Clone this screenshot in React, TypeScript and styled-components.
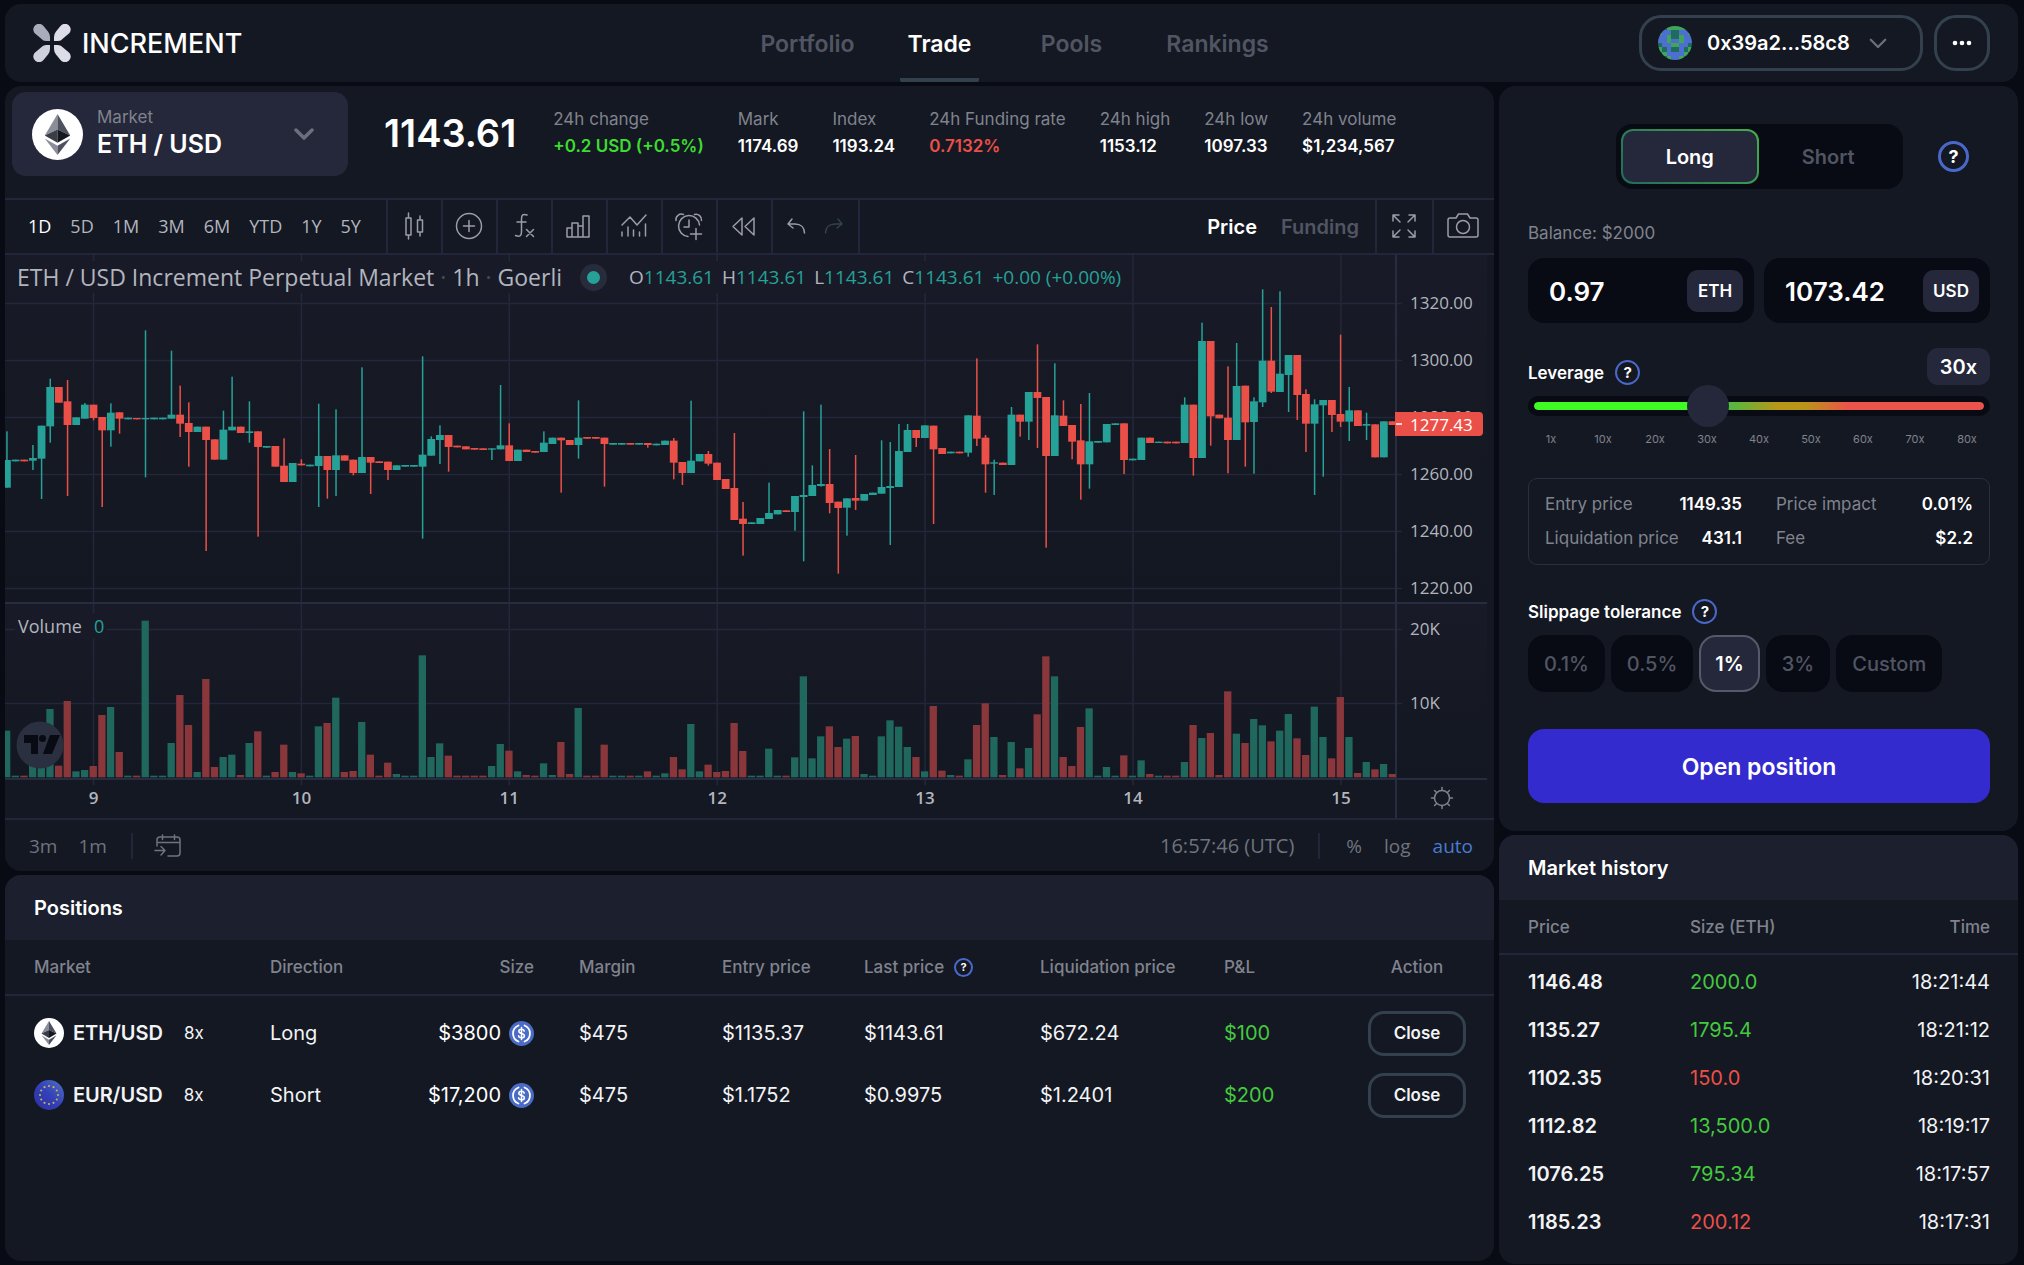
import React, { useState } from "react";
import styled, { createGlobalStyle, css } from "styled-components";

const c = {
  page: "#080b13",
  panel: "#141822",
  raised: "#1c1f2e",
  chip: "#24283a",
  line: "#23263a",
  outline: "#33414f",
  text: "#ffffff",
  muted: "#80838e",
  dim: "#515563",
  green: "#45c93f",
  lime: "#3ddc30",
  red: "#eb5048",
  teal: "#26a197",
  blue: "#4a68c9",
  chartText: "#b2b5be",
};

const ui = `Inter, "Liberation Sans", sans-serif`;
const chartFont = `"Open Sans", "Noto Sans", sans-serif`;

const GlobalStyle = createGlobalStyle`
  *, *::before, *::after { box-sizing: border-box; }
  body { margin: 0; background: ${c.page}; color: ${c.text}; font-family: ${ui}; }
  button, input, select { font: inherit; color: inherit; margin: 0; }
  button { background: none; border: 0; padding: 0; cursor: pointer; }
  h1, h2, p, dl, dd { margin: 0; }
  svg { display: block; flex: none; }
`;

/* ---------- page frame ---------- */

const Page = styled.div`
  min-height: 100vh;
  display: flex;
  flex-direction: column;
  gap: 4px;
  padding: 4px 6px 1px 5px;
`;

const Panel = styled.section`
  background: ${c.panel};
  border-radius: 16px;
  overflow: hidden;
`;

const Main = styled.main`
  flex: 1;
  display: grid;
  grid-template-columns: minmax(0, 1fr) 519px;
  gap: 5px;
`;

const Column = styled.div<{ $bottom?: number }>`
  display: flex;
  flex-direction: column;
  gap: 4px;
  padding-bottom: ${(p) => p.$bottom ?? 0}px;
`;

const GrowPanel = styled(Panel)`
  flex: 1;
`;

/* ---------- header ---------- */

const Header = styled.header`
  height: 78px;
  display: grid;
  grid-template-columns: 1fr auto 1fr;
  align-items: center;
  padding: 0 28px;
  background: ${c.panel};
  border-radius: 16px;
`;

const Brand = styled.a`
  display: flex;
  align-items: center;
  gap: 11px;
  color: ${c.text};
  text-decoration: none;
  font-size: 27px;
  font-weight: 500;
`;

const Nav = styled.nav`
  align-self: stretch;
  display: grid;
  grid-template-columns: repeat(3, 132px) 160px;
  justify-items: center;
  padding-left: 16px;
`;

const NavLink = styled.a<{ $active?: boolean }>`
  display: flex;
  align-items: center;
  padding: 6px 8px 0;
  border-bottom: 4px solid ${(p) => (p.$active ? c.outline : "transparent")};
  border-radius: 2px;
  color: ${(p) => (p.$active ? c.text : c.dim)};
  font-size: 23px;
  font-weight: 600;
  text-decoration: none;
`;

const Actions = styled.div`
  display: flex;
  justify-content: flex-end;
  gap: 11px;
`;

const OutlineButton = styled.button`
  display: flex;
  align-items: center;
  justify-content: center;
  border: 3px solid ${c.outline};
  font-weight: 600;
`;

const AccountButton = styled(OutlineButton)`
  height: 56px;
  width: 284px;
  justify-content: flex-start;
  gap: 15px;
  padding: 0 16px;
  border-radius: 22px;
  font-size: 20px;
`;

const AccountName = styled.span`
  margin-right: 4px;
`;

const MoreButton = styled(OutlineButton)`
  width: 56px;
  height: 56px;
  border-radius: 22px;
`;

/* ---------- market summary ---------- */

const Summary = styled.div`
  display: flex;
  align-items: flex-start;
  height: 114px;
  padding: 6px 7px 0;
  border-bottom: 2px solid ${c.line};
`;

const MarketPicker = styled.div`
  position: relative;
  display: flex;
  align-items: center;
  gap: 14px;
  width: 336px;
  height: 84px;
  padding: 0 20px;
  background: ${c.chip};
  border-radius: 14px;
`;

const PickerText = styled.div`
  flex: 1;
  display: flex;
  flex-direction: column;
  padding-bottom: 4px;
`;

const PickerLabel = styled.label`
  color: ${c.muted};
  font-size: 17px;
  line-height: 24px;
`;

const PickerSelect = styled.select`
  appearance: none;
  background: transparent;
  border: 0;
  outline: 0;
  padding: 0;
  font-size: 25px;
  font-weight: 600;
  line-height: 30px;
  option {
    background: ${c.chip};
  }
`;

const ChevronSlot = styled.span`
  margin-right: 14px;
`;

const LastPrice = styled.h1`
  margin: 0 37px 0 36px;
  font-size: 38px;
  font-weight: 600;
  line-height: 82px;
`;

const Stats = styled.dl`
  display: flex;
  gap: 34px;
  padding-top: 14px;
`;

const Stat = styled.div`
  font-size: 17px;
  line-height: 27px;
  white-space: nowrap;
`;

const StatName = styled.dt`
  color: ${c.muted};
`;

const StatValue = styled.dd<{ $color?: string }>`
  color: ${(p) => p.$color ?? c.text};
  font-weight: 600;
`;

/* ---------- chart toolbar ---------- */

const Toolbar = styled.div`
  display: flex;
  align-items: stretch;
  height: 55px;
  border-bottom: 2px solid ${c.line};
`;

const Ranges = styled.div`
  display: flex;
  align-items: center;
  justify-content: space-between;
  width: 381px;
  padding: 0 25px 2px 23px;
`;

const RangeButton = styled.button<{ $active?: boolean }>`
  color: ${(p) => (p.$active ? c.text : c.chartText)};
  font-family: ${chartFont};
  font-size: 18px;
`;

const ToolCell = styled.div<{ $w?: number }>`
  display: flex;
  align-items: center;
  justify-content: center;
  gap: 18px;
  width: ${(p) => p.$w ?? 55}px;
  padding: 0 2px 2px 0;
  border-left: 2px solid ${c.line};
  color: #9a9da8;
`;

const ToolSpacer = styled.div`
  flex: 1;
  display: flex;
  align-items: center;
  justify-content: flex-end;
  gap: 24px;
  padding-right: 16px;
  border-left: 2px solid ${c.line};
`;

const ViewButton = styled.button<{ $active?: boolean }>`
  color: ${(p) => (p.$active ? c.text : c.dim)};
  font-size: 20px;
  font-weight: 600;
`;

/* ---------- chart ---------- */

const ChartArea = styled.div`
  position: relative;
  font-family: ${chartFont};
`;

const Legend = styled.div`
  position: absolute;
  left: 9px;
  top: 6px;
  display: flex;
  align-items: center;
  gap: 18px;
  height: 32px;
  padding: 0 3px;
  background: #181b27;
  color: ${c.chartText};
  white-space: nowrap;
`;

const LegendTitle = styled.h2`
  font-size: 23px;
  font-weight: 400;
  span {
    color: #454a5a;
  }
`;

const StatusDot = styled.span`
  width: 27px;
  height: 27px;
  border: 7px solid #272b3b;
  border-radius: 50%;
  background: ${c.teal};
`;

const Ohlc = styled.p`
  display: flex;
  gap: 8px;
  margin-left: 4px;
  font-size: 19px;
  b {
    color: ${c.teal};
    font-weight: 400;
  }
`;

const VolumeLegend = styled.p`
  position: absolute;
  left: 10px;
  top: 358px;
  padding: 0 3px;
  background: #181b27;
  color: ${c.chartText};
  font-size: 18px;
  line-height: 26px;
  b {
    margin-left: 12px;
    color: ${c.teal};
    font-weight: 400;
  }
`;

const ChartSvg = styled.svg`
  width: 100%;
  height: auto;
`;

const ChartFooter = styled.div`
  display: flex;
  align-items: center;
  height: 53px;
  padding: 0 21px 0 24px;
  border-top: 2px solid ${c.line};
  color: #6f737f;
  font-family: ${chartFont};
  font-size: 19px;
`;

const FooterGroup = styled.div<{ $gap: number }>`
  display: flex;
  align-items: center;
  gap: ${(p) => p.$gap}px;
`;

const FooterGap = styled.div`
  flex: 1;
`;

const Clock = styled.time`
  font-size: 20px;
`;

const Divider = styled.span<{ $after: number }>`
  width: 2px;
  height: 26px;
  margin: 0 ${(p) => p.$after}px 0 24px;
  background: ${c.line};
`;

const FooterButton = styled.button<{ $active?: boolean }>`
  color: ${(p) => (p.$active ? "#4a7bd0" : "inherit")};
`;

/* ---------- tables ---------- */

const TitleBar = styled.h2<{ $pad: number }>`
  height: 65px;
  padding: 0 ${(p) => p.$pad}px;
  background: ${c.raised};
  font-size: 20px;
  font-weight: 600;
  line-height: 67px;
`;

const Table = styled.table<{ $head: number; $row: number; $pad: number; $gap: number }>`
  width: 100%;
  table-layout: fixed;
  border-collapse: collapse;
  font-size: 20px;
  text-align: left;
  th {
    height: ${(p) => p.$head}px;
    padding: 0;
    border-bottom: 2px solid ${c.line};
    color: ${c.muted};
    font-size: 17px;
    font-weight: 500;
  }
  td {
    height: ${(p) => p.$row}px;
    padding: 0;
  }
  th:first-child,
  td:first-child {
    padding-left: ${(p) => p.$pad}px;
  }
  th:last-child,
  td:last-child {
    padding-right: 28px;
  }
  tbody::before {
    content: "";
    display: block;
    height: ${(p) => p.$gap}px;
  }
`;

const Cell = styled.td<{ $color?: string; $bold?: boolean; $right?: boolean }>`
  color: ${(p) => p.$color ?? "#f2f3f5"};
  font-weight: ${(p) => (p.$bold ? 600 : 400)};
  text-align: ${(p) => (p.$right ? "right" : "left")};
`;

const HeadCell = styled.th<{ $align?: string }>`
  text-align: ${(p) => p.$align ?? "left"};
`;

const sizeColumn = css`
  && {
    padding-right: 45px;
    text-align: right;
  }
`;
const SizeHead = styled.th`
  ${sizeColumn}
`;
const SizeCell = styled.td`
  ${sizeColumn}
`;

const Inline = styled.span<{ $gap: number; $end?: boolean }>`
  display: flex;
  align-items: center;
  justify-content: ${(p) => (p.$end ? "flex-end" : "flex-start")};
  gap: ${(p) => p.$gap}px;
`;

const Pair = styled.span`
  font-weight: 600;
`;

const Multiplier = styled.span`
  margin-left: 12px;
  font-size: 17px;
`;

const CloseButton = styled(OutlineButton)`
  width: 98px;
  height: 45px;
  border-radius: 16px;
  font-size: 17px;
`;

/* ---------- order form ---------- */

const OrderForm = styled.form`
  display: flex;
  flex-direction: column;
  padding: 38px 28px 28px 29px;
`;

const SideRow = styled.div`
  display: grid;
  grid-template-columns: 1fr auto 1fr;
  align-items: center;
`;

const SideToggle = styled.div`
  grid-column: 2;
  display: flex;
  width: 287px;
  height: 65px;
  padding: 5px;
  background: ${c.page};
  border-radius: 16px;
`;

const SideButton = styled.button<{ $active?: boolean }>`
  flex: 1;
  border: 2px solid transparent;
  border-radius: 12px;
  color: ${c.dim};
  font-size: 20px;
  font-weight: 600;
  ${(p) =>
    p.$active &&
    css`
      color: ${c.text};
      background:
        linear-gradient(${c.chip}, ${c.chip}) padding-box,
        linear-gradient(45deg, #1f6b5c, #46ad4b) border-box;
    `}
`;

const HelpButton = styled.button<{ $size: number }>`
  display: inline-flex;
  align-items: center;
  justify-content: center;
  flex: none;
  width: ${(p) => p.$size}px;
  height: ${(p) => p.$size}px;
  border: ${(p) => (p.$size > 28 ? 3 : 2)}px solid ${c.blue};
  border-radius: 50%;
  color: ${c.text};
  font-size: ${(p) => (p.$size > 28 ? 18 : p.$size > 20 ? 15 : 11)}px;
  font-weight: 700;
  line-height: 1;
`;

const SideHelp = styled(HelpButton)`
  justify-self: end;
  margin-right: 21px;
`;

const Balance = styled.p`
  margin: 32px 0 13px;
  color: ${c.muted};
  font-size: 17px;
  line-height: 24px;
`;

const Amounts = styled.div`
  display: grid;
  grid-template-columns: 1fr 1fr;
  gap: 10px;
`;

const AmountField = styled.label`
  display: flex;
  align-items: center;
  height: 65px;
  padding: 0 11px 0 21px;
  background: ${c.page};
  border-radius: 16px;
`;

const AmountInput = styled.input`
  flex: 1;
  min-width: 0;
  width: 0;
  padding: 2px 0 0;
  border: 0;
  outline: 0;
  background: transparent;
  font-size: 26px;
  font-weight: 600;
`;

const Unit = styled.span`
  width: 56px;
  background: ${c.chip};
  border-radius: 11px;
  font-size: 17px;
  font-weight: 600;
  line-height: 42px;
  text-align: center;
`;

const FieldRow = styled.div`
  display: flex;
  align-items: flex-end;
  justify-content: space-between;
`;

const LeverageRow = styled(FieldRow)`
  margin-top: 25px;
`;

const SlippageRow = styled(FieldRow)`
  margin: 34px 0 11px;
`;

const FieldLabel = styled.div`
  display: flex;
  align-items: center;
  gap: 11px;
  height: 25px;
  font-size: 17px;
  font-weight: 600;
`;

const LeverageValue = styled.output`
  width: 63px;
  height: 37px;
  background: ${c.chip};
  border-radius: 11px;
  font-size: 20px;
  font-weight: 600;
  line-height: 38px;
  text-align: center;
`;

const Slider = styled.input`
  appearance: none;
  width: 100%;
  height: 42px;
  margin: 0;
  background: transparent;
  &::-webkit-slider-runnable-track {
    height: 20px;
    border: 6px solid ${c.page};
    border-radius: 10px;
    background: linear-gradient(
        90deg,
        #3ffa23 0%,
        #3ffa23 34%,
        #55b840 44%,
        #b89618 54%,
        #b89618 60%,
        #ec534b 70%
      )
      padding-box;
  }
  &::-webkit-slider-thumb {
    appearance: none;
    width: 42px;
    height: 42px;
    margin-top: -17px;
    border-radius: 50%;
    background: ${c.chip};
  }
`;

const Ticks = styled.div`
  display: flex;
  justify-content: space-between;
  margin: 4px 0 31px;
  padding: 0 2px;
  color: ${c.muted};
  font-size: 11px;
  line-height: 16px;
  span {
    width: 42px;
    text-align: center;
  }
`;

const Details = styled.dl`
  display: grid;
  grid-template-columns: 1fr 1fr;
  column-gap: 34px;
  padding: 8px 16px 9px;
  border: 1px solid #2a2e40;
  border-radius: 9px;
`;

const Detail = styled.div`
  display: flex;
  justify-content: space-between;
  font-size: 17px;
  line-height: 34px;
  dt {
    color: ${c.muted};
  }
  dd {
    font-weight: 600;
  }
`;

const Options = styled.div`
  display: flex;
  gap: 6px;
`;

const OptionButton = styled.button<{ $active?: boolean }>`
  height: 57px;
  padding: 0 14px;
  border: 2px solid ${(p) => (p.$active ? "#555a6b" : c.page)};
  border-radius: 17px;
  background: ${(p) => (p.$active ? c.chip : c.page)};
  color: ${(p) => (p.$active ? c.text : c.dim)};
  font-size: 20px;
  font-weight: ${(p) => (p.$active ? 600 : 500)};
`;

const SubmitButton = styled.button`
  height: 74px;
  margin-top: 37px;
  padding-top: 2px;
  border-radius: 16px;
  background: #332bcd;
  font-size: 23px;
  font-weight: 600;
`;

/* ---------- icons ---------- */

const LogoIcon = () => (
  <svg width="38" height="38" viewBox="0 0 38 38">
    <path d="M1.500 9A5.500 5.500 0 0 1 10.500 2L15 7.500Q17 10 17 13V17H13Q10 17 8 14.500Z" fill="#a9acbb" />
    <path d="M36.500 9A5.500 5.500 0 0 0 27.500 2L23 7.500Q21 10 21 13V17H25Q28 17 30 14.500Z" fill="#dcdde6" />
    <path d="M1.500 29A5.500 5.500 0 0 0 10.500 36L15 30.500Q17 28 17 25V21H13Q10 21 8 23.500Z" fill="#cfd1dc" />
    <path d="M36.500 29A5.500 5.500 0 0 1 27.500 36L23 30.500Q21 28 21 25V21H25Q28 21 30 23.500Z" fill="#dcdde6" />
  </svg>
);

const Chevron = ({ size, stroke }: { size: number; stroke: number }) => (
  <svg width={size} height={size * 0.6} viewBox="0 0 20 12" fill="none" stroke="#6b6f7e" strokeWidth={stroke} strokeLinecap="round" strokeLinejoin="round">
    <path d="M2 2l8 8 8-8" />
  </svg>
);

const identicon = ["ttgggggt", "gbbttbbg", "bbgttgbb", "bbgbbgbb", "tbbggbbt", "gtbttbtg", "tgbbbbgt", "ttgbbgtt"];
const identiconColors: Record<string, string> = { g: "#3fa55a", t: "#1f6b5c", b: "#4c6fd0" };

const Avatar = () => (
  <svg width="34" height="34" viewBox="0 0 8 8" shapeRendering="crispEdges">
    <defs>
      <clipPath id="avatar-clip">
        <circle cx="4" cy="4" r="4" />
      </clipPath>
    </defs>
    <g clipPath="url(#avatar-clip)">
      {identicon.map((row, y) =>
        row.split("").map((k, x) => <rect key={`${x}-${y}`} x={x} y={y} width="1" height="1" fill={identiconColors[k]} />)
      )}
    </g>
  </svg>
);

const EthIcon = ({ size }: { size: number }) => (
  <svg width={size} height={size} viewBox="0 0 52 52">
    <circle cx="26" cy="26" r="26" fill="#fff" />
    <path d="M26 5L13 27 26 21Z" fill="#8b8d99" />
    <path d="M26 5L39 27 26 21Z" fill="#4d505e" />
    <path d="M13 27L26 21V34.500Z" fill="#3a3c48" />
    <path d="M39 27L26 21V34.500Z" fill="#15171f" />
    <path d="M13 30L26 37.500V47Z" fill="#8b8d99" />
    <path d="M39 30L26 37.500V47Z" fill="#4d505e" />
  </svg>
);

const EurIcon = ({ size }: { size: number }) => (
  <svg width={size} height={size} viewBox="0 0 30 30">
    <defs>
      <linearGradient id="eur-fill" x1="1" y1="0" x2="0" y2="1">
        <stop offset="0" stopColor="#4f72c4" />
        <stop offset="0.500" stopColor="#3340b8" />
        <stop offset="1" stopColor="#2c2fa0" />
      </linearGradient>
    </defs>
    <circle cx="15" cy="15" r="15" fill="url(#eur-fill)" />
    {Array.from({ length: 12 }, (_, i) => {
      const a = (i * Math.PI) / 6;
      return <circle key={i} cx={15 + 9 * Math.sin(a)} cy={15 - 9 * Math.cos(a)} r="1.100" fill="#c4b25c" />;
    })}
  </svg>
);

const UsdcIcon = () => (
  <svg width="25" height="25" viewBox="0 0 25 25" fill="none" stroke="#fff" strokeLinecap="round">
    <circle cx="12.500" cy="12.500" r="12.500" fill="#4a6cc6" stroke="none" />
    <path d="M9.500 4.500a8.600 8.600 0 0 0 0 16M15.500 4.500a8.600 8.600 0 0 1 0 16" strokeWidth="1.800" />
    <path d="M12.500 6.500v12M15.200 10.200c-.2-1.300-1.200-1.900-2.700-1.900-1.600 0-2.700.8-2.700 2 0 3 5.600 1.300 5.600 4.400 0 1.300-1.200 2.100-2.900 2.100s-2.800-.8-2.900-2.100" strokeWidth="1.500" />
  </svg>
);

const Icon = ({ children, w = 30, h = 30 }: { children: React.ReactNode; w?: number; h?: number }) => (
  <svg width={w} height={h} viewBox={`0 0 ${w} ${h}`} fill="none" stroke="currentColor" strokeWidth="1.500" strokeLinecap="round" strokeLinejoin="round">
    {children}
  </svg>
);

const CandlesIcon = () => (
  <Icon>
    <path d="M7 7h5v17H7zM9.500 2v5M9.500 24v4M18.500 9h5v12h-5zM21 5v4M21 21v4" />
  </Icon>
);
const CompareIcon = () => (
  <Icon>
    <circle cx="15" cy="15" r="12.500" />
    <path d="M15 9.500v11M9.500 15h11" />
  </Icon>
);
const FunctionIcon = () => (
  <Icon>
    <path d="M18 4c-4-1.500-5.500 0-5.500 4v13c0 4-2 5-6 3.500M8 11h9M17.500 18.500l7 7M24.500 18.500l-7 7" />
  </Icon>
);
const BarsIcon = () => (
  <Icon>
    <path d="M3 26V17h5v9M8 26V12h6v14M14 26V15h5v11M19 26V5h6v21M3 26h22" />
  </Icon>
);
const IndicatorIcon = () => (
  <Icon>
    <path d="M3 14l8-8 7 8L27 4M3 25v-4M9 25v-9M14.500 25v-6M20.500 25v-4M26.500 25V13" />
  </Icon>
);
const AlarmIcon = () => (
  <Icon>
    <path d="M14 25.500A10.500 10.500 0 1 1 25.500 14M15 9v7h-5M2 9.500A5.500 5.500 0 0 1 9.500 3.500M20.500 3.500A5.500 5.500 0 0 1 27.500 9.500M22 17.500v11M16.500 23h11" />
  </Icon>
);
const ReplayIcon = () => (
  <Icon>
    <path d="M13 7L4 15.500 13 24zM25 7l-9 8.500L25 24z" />
  </Icon>
);
const UndoIcon = () => (
  <Icon w={20} h={18}>
    <path d="M6 2L2 7l5 4M2 7h7c6 0 9.500 3.500 9.500 9" />
  </Icon>
);
const RedoIcon = () => (
  <Icon w={20} h={18}>
    <path d="M14 2l4 5-5 4M18 7h-7c-6 0-9.500 3.500-9.500 9" stroke="#33414f" />
  </Icon>
);
const ExpandIcon = () => (
  <Icon w={26} h={26}>
    <path d="M2 8V2h6M2 2l7 7M18 2h6v6M24 2l-7 7M2 18v6h6M2 24l7-7M18 24h6v-6M24 24l-7-7" />
  </Icon>
);
const CameraIcon = () => (
  <Icon w={34} h={28}>
    <path d="M4 6h6l2.500-4h9L24 6h6q2 0 2 2v15q0 2-2 2H4q-2 0-2-2V8q0-2 2-2z" />
    <circle cx="17" cy="15" r="6.500" />
  </Icon>
);
const CalendarIcon = () => (
  <Icon w={28} h={24}>
    <path d="M3 12V6q0-3 3-3h17q3 0 3 3v13q0 3-3 3H14M3 8.500h23M8.500 1v4.500M20.500 1v4.500M1 16.500h10M7 12.500l4 4-4 4.500" />
  </Icon>
);

/* ---------- chart data ----------
   One entry per bar: direction, high, body top, body bottom, low, volume top.
   Distances run down from the top of each pane, three units to a pixel. */

type Bar = [0 | 1, number, number, number, number, number];

const bars: Bar[] = [
  [1, 544, 630, 713, 713, 392], [1, 629, 629, 634, 634, 527], [0, 629, 629, 634, 634, 527], [1, 585, 624, 632, 660, 488],
  [1, 527, 527, 626, 747, 488], [1, 386, 411, 529, 578, 327], [0, 411, 411, 458, 458, 497], [0, 390, 454, 525, 738, 303],
  [1, 502, 502, 525, 525, 514], [1, 459, 464, 506, 506, 510], [0, 464, 464, 504, 511, 498], [0, 501, 501, 541, 771, 345],
  [1, 460, 488, 541, 590, 321], [0, 487, 487, 506, 551, 456], [1, 503, 503, 508, 508, 527], [0, 504, 504, 508, 508, 527],
  [1, 241, 504, 508, 682, 62], [1, 503, 503, 508, 508, 527], [1, 503, 503, 508, 508, 527], [1, 302, 494, 506, 506, 429],
  [0, 407, 494, 521, 561, 285], [0, 457, 519, 546, 650, 375], [1, 530, 530, 546, 546, 516], [0, 530, 530, 570, 903, 237],
  [0, 568, 568, 629, 629, 501], [1, 482, 539, 629, 629, 471], [1, 380, 530, 541, 541, 464], [0, 530, 530, 549, 549, 525],
  [1, 454, 544, 549, 578, 429], [0, 544, 544, 591, 860, 394], [1, 588, 588, 593, 593, 527], [0, 588, 588, 650, 650, 516],
  [0, 565, 647, 696, 696, 434], [1, 639, 639, 696, 696, 516], [0, 628, 641, 646, 646, 520], [1, 644, 644, 649, 649, 527],
  [1, 461, 618, 648, 771, 379], [0, 618, 618, 660, 746, 369], [1, 478, 616, 660, 738, 293], [0, 616, 616, 632, 632, 516],
  [0, 629, 629, 669, 676, 513], [1, 352, 621, 669, 669, 366], [0, 621, 621, 638, 732, 464], [0, 634, 634, 639, 639, 527],
  [0, 635, 635, 660, 690, 488], [1, 646, 646, 660, 660, 522], [1, 645, 645, 650, 650, 527], [1, 645, 645, 650, 650, 527],
  [1, 319, 614, 650, 866, 166], [1, 559, 567, 617, 617, 471], [1, 526, 555, 570, 642, 430], [0, 555, 555, 591, 665, 467],
  [0, 587, 587, 592, 592, 527], [0, 589, 589, 598, 598, 527], [0, 594, 594, 599, 599, 527], [0, 595, 595, 600, 600, 527],
  [1, 595, 595, 599, 630, 498], [1, 405, 586, 598, 598, 432], [0, 520, 586, 633, 633, 452], [1, 599, 599, 633, 633, 514],
  [0, 599, 599, 606, 606, 525], [0, 603, 603, 608, 608, 527], [1, 544, 578, 606, 606, 490], [1, 563, 563, 582, 582, 525],
  [0, 563, 563, 571, 728, 426], [0, 570, 570, 585, 585, 522], [1, 451, 563, 585, 626, 324], [0, 561, 561, 566, 566, 527],
  [0, 561, 561, 566, 566, 527], [0, 563, 563, 582, 710, 434], [1, 579, 579, 584, 584, 527], [1, 579, 579, 584, 584, 527],
  [0, 579, 579, 584, 584, 527], [1, 579, 579, 584, 584, 527], [0, 579, 579, 585, 593, 514], [1, 581, 581, 586, 586, 527],
  [1, 572, 572, 585, 585, 520], [0, 564, 572, 638, 688, 471], [0, 636, 636, 669, 705, 508], [1, 452, 632, 669, 669, 372],
  [1, 612, 612, 634, 634, 514], [0, 603, 612, 641, 647, 494], [0, 638, 638, 690, 690, 516], [0, 687, 687, 717, 717, 513],
  [0, 549, 714, 810, 810, 369], [0, 756, 806, 822, 917, 453], [1, 817, 817, 822, 822, 527], [1, 804, 804, 822, 822, 527],
  [1, 698, 789, 807, 807, 446], [1, 780, 780, 793, 793, 527], [0, 781, 781, 786, 786, 527], [1, 738, 738, 786, 842, 472],
  [1, 484, 735, 741, 934, 229], [1, 646, 705, 738, 738, 475], [1, 464, 702, 708, 710, 409], [0, 597, 702, 759, 790, 379],
  [0, 755, 755, 774, 971, 441], [1, 745, 745, 773, 857, 416], [0, 615, 744, 752, 780, 408], [1, 732, 732, 752, 752, 522],
  [1, 728, 728, 735, 735, 527], [1, 571, 711, 731, 731, 409], [1, 576, 708, 714, 885, 361], [1, 522, 603, 711, 711, 380],
  [1, 522, 540, 606, 606, 441], [0, 540, 540, 564, 591, 471], [1, 526, 526, 564, 564, 514], [0, 527, 527, 598, 822, 318],
  [0, 594, 594, 612, 612, 512], [1, 605, 605, 610, 610, 525], [0, 605, 605, 610, 610, 527], [1, 496, 496, 608, 620, 478],
  [0, 325, 497, 566, 588, 375], [0, 555, 563, 643, 728, 310], [1, 629, 637, 641, 735, 411], [0, 638, 638, 645, 645, 525],
  [1, 471, 494, 645, 645, 426], [0, 494, 494, 515, 560, 505], [1, 426, 426, 515, 570, 444], [0, 283, 426, 444, 594, 343],
  [0, 441, 441, 618, 893, 169], [1, 340, 496, 618, 618, 229], [0, 451, 497, 528, 528, 471], [0, 525, 525, 575, 628, 498],
  [0, 462, 571, 643, 749, 381], [1, 429, 574, 643, 716, 325], [1, 573, 573, 578, 578, 527], [1, 522, 522, 577, 577, 501],
  [1, 520, 520, 525, 525, 527], [0, 520, 520, 630, 672, 466], [1, 626, 626, 631, 631, 527], [1, 563, 563, 630, 630, 481],
  [0, 563, 563, 579, 579, 522], [1, 575, 575, 579, 579, 527], [0, 575, 575, 580, 580, 527], [0, 575, 575, 580, 580, 527],
  [1, 442, 464, 579, 579, 486], [0, 464, 464, 624, 677, 375], [1, 218, 273, 624, 624, 414], [0, 273, 273, 499, 587, 399],
  [0, 494, 494, 505, 505, 525], [0, 349, 503, 570, 670, 274], [1, 279, 408, 570, 570, 401], [0, 407, 407, 517, 650, 429],
  [1, 442, 454, 516, 671, 357], [1, 118, 332, 457, 471, 376], [0, 171, 332, 425, 429, 424], [1, 124, 371, 426, 426, 392],
  [1, 315, 315, 375, 486, 342], [0, 315, 315, 435, 510, 415], [0, 418, 432, 521, 606, 465], [1, 448, 463, 521, 735, 320],
  [1, 450, 450, 466, 680, 411], [0, 450, 450, 495, 546, 475], [0, 254, 492, 515, 531, 291], [1, 411, 481, 515, 573, 411],
  [0, 481, 481, 528, 528, 519], [1, 488, 522, 527, 570, 486], [0, 523, 523, 622, 622, 508], [1, 514, 514, 622, 622, 492],
  [0, 514, 514, 525, 525, 522],
];

const plotRight = 1391;
const barX = (i: number) => 1.9 + 8.66 * i;
const priceY = (v: number) => v / 3 - 5;
const VOLUME_BASE = 532;
const priceGrid: [number, string][] = [
  [48, "1320.00"], [105, "1300.00"], [162, "1280.00"], [219, "1260.00"], [276, "1240.00"], [333, "1220.00"],
];
const volumeGrid: [number, string][] = [[374, "20K"], [448, "10K"]];
const days = ["9", "10", "11", "12", "13", "14", "15"];

const Chart = () => (
  <ChartSvg viewBox="0 0 1489 563" role="img" aria-label="ETH / USD hourly candles with volume">
    <defs>
      <linearGradient id="pane-fill" x1="0" y1="0" x2="0" y2="1">
        <stop offset="0" stopColor="#181b27" />
        <stop offset="1" stopColor="#131721" />
      </linearGradient>
    </defs>
    <rect width="1482" height="348" fill="url(#pane-fill)" />
    <rect y="348" width="1482" height="176" fill="url(#pane-fill)" />
    <g stroke="#232739" strokeWidth="1.500">
      {[...priceGrid, ...volumeGrid].map(([y]) => (
        <path key={y} d={`M0 ${y}.500H${plotRight + 6}`} />
      ))}
      {days.map((d, i) => (
        <path key={d} d={`M${88.5 + 207.9 * i} 0V530`} />
      ))}
    </g>
    <g stroke="#282c40" strokeWidth="2">
      <path d={`M0 348H1482M0 524H1482M${plotRight} 0V563`} />
    </g>
    {bars.map(([up, high, top, bottom, low, volume], i) => {
      const x = barX(i);
      const left = Math.max(0, x - 3.9);
      const width = x + 3.9 - left;
      return (
        <g key={i} fill={up ? c.teal : c.red}>
          {low > high && <rect x={x - 0.7} y={priceY(high)} width={1.5} height={(low - high) / 3} />}
          <rect x={left} y={priceY(top)} width={width} height={(bottom - top) / 3} />
          <rect x={left} y={345 + volume / 3} width={width - 0.5} height={(VOLUME_BASE - volume) / 3} fill={up ? "#20675e" : "#8a373c"} />
        </g>
      );
    })}
    <g fill={c.chartText} fontSize="17">
      {[...priceGrid, ...volumeGrid].map(([y, label]) => (
        <text key={label} x="1405" y={y + 6}>{label}</text>
      ))}
    </g>
    <g fill={c.chartText} fontSize="17" fontWeight="600" textAnchor="middle">
      {days.map((d, i) => (
        <text key={d} x={88.5 + 207.9 * i} y="549">{d}</text>
      ))}
    </g>
    <path d="M1390 157h84q4 0 4 4v16q0 4-4 4h-84z" fill={c.red} />
    <path d="M1391 169h6" stroke="#fff" strokeWidth="1.500" />
    <text x="1405" y="176" fill="#fff" fontSize="17" fontWeight="500">1277.43</text>
    <circle cx="35" cy="490" r="23.500" fill="#2a3040" />
    <path d="M19 480h14v19h-7v-11h-7zM45 480h10l-8 19h-9z" fill="#080b13" />
    <circle cx="37.500" cy="483.500" r="3.500" fill="#080b13" />
    <g transform="translate(1437 543)" fill="none" stroke="#80838e" strokeWidth="1.500" strokeLinecap="round">
      <circle r="7.500" />
      {Array.from({ length: 8 }, (_, i) => (
        <path key={i} d="M0-8V-10.500" transform={`rotate(${i * 45})`} />
      ))}
    </g>
  </ChartSvg>
);

/* ---------- page data ---------- */

const stats = [
  { name: "24h change", value: "+0.2 USD (+0.5%)", color: c.lime },
  { name: "Mark", value: "1174.69" },
  { name: "Index", value: "1193.24" },
  { name: "24h Funding rate", value: "0.7132%", color: c.red },
  { name: "24h high", value: "1153.12" },
  { name: "24h low", value: "1097.33" },
  { name: "24h volume", value: "$1,234,567" },
];

const tools = [
  { name: "Chart type", icon: <CandlesIcon /> },
  { name: "Compare", icon: <CompareIcon /> },
  { name: "Functions", icon: <FunctionIcon /> },
  { name: "Financials", icon: <BarsIcon /> },
  { name: "Indicators", icon: <IndicatorIcon /> },
  { name: "Alert", icon: <AlarmIcon /> },
  { name: "Replay", icon: <ReplayIcon /> },
];

const positions = [
  { icon: <EthIcon size={30} />, pair: "ETH/USD", side: "Long", size: "$3800", margin: "$475", entry: "$1135.37", last: "$1143.61", liq: "$672.24", pnl: "$100" },
  { icon: <EurIcon size={30} />, pair: "EUR/USD", side: "Short", size: "$17,200", margin: "$475", entry: "$1.1752", last: "$0.9975", liq: "$1.2401", pnl: "$200" },
];
const positionColumns = [265, 160, 149, 143, 142, 176, 184, 144, 126];

const trades = [
  { price: "1146.48", size: "2000.0", time: "18:21:44", up: true },
  { price: "1135.27", size: "1795.4", time: "18:21:12", up: true },
  { price: "1102.35", size: "150.0", time: "18:20:31", up: false },
  { price: "1112.82", size: "13,500.0", time: "18:19:17", up: true },
  { price: "1076.25", size: "795.34", time: "18:17:57", up: true },
  { price: "1185.23", size: "200.12", time: "18:17:31", up: false },
];

const details = [
  ["Entry price", "1149.35"],
  ["Price impact", "0.01%"],
  ["Liquidation price", "431.1"],
  ["Fee", "$2.2"],
];

const leverageSteps = ["1x", "10x", "20x", "30x", "40x", "50x", "60x", "70x", "80x"];

/* ---------- sections ---------- */

const TopBar = () => (
  <Header>
    <Brand href="#">
      <LogoIcon />
      INCREMENT
    </Brand>
    <Nav>
      {["Portfolio", "Trade", "Pools", "Rankings"].map((name) => (
        <NavLink key={name} href="#" $active={name === "Trade"}>
          {name}
        </NavLink>
      ))}
    </Nav>
    <Actions>
      <AccountButton>
        <Avatar />
        <AccountName>0x39a2...58c8</AccountName>
        <Chevron size={18} stroke={2.5} />
      </AccountButton>
      <MoreButton aria-label="More">
        <svg width="20" height="6" viewBox="0 0 20 6" fill="#fff">
          <circle cx="3" cy="3" r="2.300" />
          <circle cx="10" cy="3" r="2.300" />
          <circle cx="17" cy="3" r="2.300" />
        </svg>
      </MoreButton>
    </Actions>
  </Header>
);

const MarketPanel = () => {
  const [range, setRange] = useState("1D");
  const [view, setView] = useState("Price");
  return (
    <Panel>
      <Summary>
        <MarketPicker>
          <EthIcon size={51} />
          <PickerText>
            <PickerLabel htmlFor="market">Market</PickerLabel>
            <PickerSelect id="market">
              <option>ETH / USD</option>
              <option>EUR / USD</option>
            </PickerSelect>
          </PickerText>
          <ChevronSlot>
            <Chevron size={20} stroke={3.5} />
          </ChevronSlot>
        </MarketPicker>
        <LastPrice>1143.61</LastPrice>
        <Stats>
          {stats.map((s) => (
            <Stat key={s.name}>
              <StatName>{s.name}</StatName>
              <StatValue $color={s.color}>{s.value}</StatValue>
            </Stat>
          ))}
        </Stats>
      </Summary>
      <Toolbar>
        <Ranges>
          {["1D", "5D", "1M", "3M", "6M", "YTD", "1Y", "5Y"].map((r) => (
            <RangeButton key={r} $active={r === range} onClick={() => setRange(r)}>
              {r}
            </RangeButton>
          ))}
        </Ranges>
        {tools.map((t) => (
          <ToolCell key={t.name}>
            <button aria-label={t.name}>{t.icon}</button>
          </ToolCell>
        ))}
        <ToolCell $w={87}>
          <button aria-label="Undo"><UndoIcon /></button>
          <button aria-label="Redo"><RedoIcon /></button>
        </ToolCell>
        <ToolSpacer>
          {["Price", "Funding"].map((v) => (
            <ViewButton key={v} $active={v === view} onClick={() => setView(v)}>
              {v}
            </ViewButton>
          ))}
        </ToolSpacer>
        <ToolCell $w={57}>
          <button aria-label="Fullscreen"><ExpandIcon /></button>
        </ToolCell>
        <ToolCell $w={62}>
          <button aria-label="Snapshot"><CameraIcon /></button>
        </ToolCell>
      </Toolbar>
      <ChartArea>
        <Chart />
        <Legend>
          <LegendTitle>
            ETH / USD Increment Perpetual Market <span>·</span> 1h <span>·</span> Goerli
          </LegendTitle>
          <StatusDot />
          <Ohlc>
            {["O", "H", "L", "C"].map((k) => (
              <span key={k}>
                {k}
                <b>1143.61</b>
              </span>
            ))}
            <b>+0.00 (+0.00%)</b>
          </Ohlc>
        </Legend>
        <VolumeLegend>
          Volume<b>0</b>
        </VolumeLegend>
      </ChartArea>
      <ChartFooter>
        <FooterGroup $gap={21}>
          <FooterButton>3m</FooterButton>
          <FooterButton>1m</FooterButton>
        </FooterGroup>
        <Divider $after={21} />
        <button aria-label="Go to date"><CalendarIcon /></button>
        <FooterGap />
        <Clock>16:57:46 (UTC)</Clock>
        <Divider $after={26} />
        <FooterGroup $gap={22}>
          <FooterButton>%</FooterButton>
          <FooterButton>log</FooterButton>
          <FooterButton $active>auto</FooterButton>
        </FooterGroup>
      </ChartFooter>
    </Panel>
  );
};

const Positions = () => (
  <GrowPanel>
    <TitleBar $pad={29}>Positions</TitleBar>
    <Table $head={55} $row={62} $pad={29} $gap={6}>
      <colgroup>
        {positionColumns.map((w, i) => (
          <col key={i} width={w} />
        ))}
      </colgroup>
      <thead>
        <tr>
          <HeadCell>Market</HeadCell>
          <HeadCell>Direction</HeadCell>
          <SizeHead>Size</SizeHead>
          <HeadCell>Margin</HeadCell>
          <HeadCell>Entry price</HeadCell>
          <HeadCell>
            <Inline $gap={10}>
              Last price
              <HelpButton $size={19} aria-label="About last price">?</HelpButton>
            </Inline>
          </HeadCell>
          <HeadCell>Liquidation price</HeadCell>
          <HeadCell>P&amp;L</HeadCell>
          <HeadCell $align="center">Action</HeadCell>
        </tr>
      </thead>
      <tbody>
        {positions.map((p) => (
          <tr key={p.pair}>
            <Cell>
              <Inline $gap={9}>
                {p.icon}
                <Pair>{p.pair}</Pair>
                <Multiplier>8x</Multiplier>
              </Inline>
            </Cell>
            <Cell>{p.side}</Cell>
            <SizeCell>
              <Inline $gap={8} $end>
                {p.size}
                <UsdcIcon />
              </Inline>
            </SizeCell>
            <Cell>{p.margin}</Cell>
            <Cell>{p.entry}</Cell>
            <Cell>{p.last}</Cell>
            <Cell>{p.liq}</Cell>
            <Cell $color={c.green}>{p.pnl}</Cell>
            <Cell>
              <CloseButton>Close</CloseButton>
            </Cell>
          </tr>
        ))}
      </tbody>
    </Table>
  </GrowPanel>
);

const OrderPanel = () => {
  const [side, setSide] = useState("Long");
  const [eth, setEth] = useState("0.97");
  const [usd, setUsd] = useState("1073.42");
  const [step, setStep] = useState(3);
  const [slippage, setSlippage] = useState("1%");
  return (
    <Panel>
      <OrderForm onSubmit={(e) => e.preventDefault()}>
        <SideRow>
          <SideToggle>
            {["Long", "Short"].map((s) => (
              <SideButton key={s} type="button" $active={s === side} aria-pressed={s === side} onClick={() => setSide(s)}>
                {s}
              </SideButton>
            ))}
          </SideToggle>
          <SideHelp type="button" $size={31} aria-label="About position side">?</SideHelp>
        </SideRow>
        <Balance>Balance: $2000</Balance>
        <Amounts>
          <AmountField>
            <AmountInput value={eth} onChange={(e) => setEth(e.target.value)} />
            <Unit>ETH</Unit>
          </AmountField>
          <AmountField>
            <AmountInput value={usd} onChange={(e) => setUsd(e.target.value)} />
            <Unit>USD</Unit>
          </AmountField>
        </Amounts>
        <LeverageRow>
          <FieldLabel>
            <label htmlFor="leverage">Leverage</label>
            <HelpButton type="button" $size={25} aria-label="About leverage">?</HelpButton>
          </FieldLabel>
          <LeverageValue htmlFor="leverage">{leverageSteps[step]}</LeverageValue>
        </LeverageRow>
        <Slider id="leverage" type="range" min={0} max={8} value={step} onChange={(e) => setStep(Number(e.target.value))} />
        <Ticks>
          {leverageSteps.map((s) => (
            <span key={s}>{s}</span>
          ))}
        </Ticks>
        <Details>
          {details.map(([name, value]) => (
            <Detail key={name}>
              <dt>{name}</dt>
              <dd>{value}</dd>
            </Detail>
          ))}
        </Details>
        <SlippageRow>
          <FieldLabel>
            Slippage tolerance
            <HelpButton type="button" $size={25} aria-label="About slippage tolerance">?</HelpButton>
          </FieldLabel>
        </SlippageRow>
        <Options>
          {["0.1%", "0.5%", "1%", "3%", "Custom"].map((s) => (
            <OptionButton key={s} type="button" $active={s === slippage} aria-pressed={s === slippage} onClick={() => setSlippage(s)}>
              {s}
            </OptionButton>
          ))}
        </Options>
        <SubmitButton type="submit">Open position</SubmitButton>
      </OrderForm>
    </Panel>
  );
};

const MarketHistory = () => (
  <GrowPanel>
    <TitleBar $pad={29}>Market history</TitleBar>
    <Table $head={54} $row={48} $pad={29} $gap={3}>
      <colgroup>
        <col width={191} />
        <col width={164} />
        <col width={164} />
      </colgroup>
      <thead>
        <tr>
          <HeadCell>Price</HeadCell>
          <HeadCell>Size (ETH)</HeadCell>
          <HeadCell $align="right">Time</HeadCell>
        </tr>
      </thead>
      <tbody>
        {trades.map((t) => (
          <tr key={t.time}>
            <Cell $bold>{t.price}</Cell>
            <Cell $color={t.up ? c.green : c.red}>{t.size}</Cell>
            <Cell $right>{t.time}</Cell>
          </tr>
        ))}
      </tbody>
    </Table>
  </GrowPanel>
);

export default function App() {
  return (
    <>
      <GlobalStyle />
      <Page>
        <TopBar />
        <Main>
          <Column $bottom={3}>
            <MarketPanel />
            <Positions />
          </Column>
          <Column>
            <OrderPanel />
            <MarketHistory />
          </Column>
        </Main>
      </Page>
    </>
  );
}
